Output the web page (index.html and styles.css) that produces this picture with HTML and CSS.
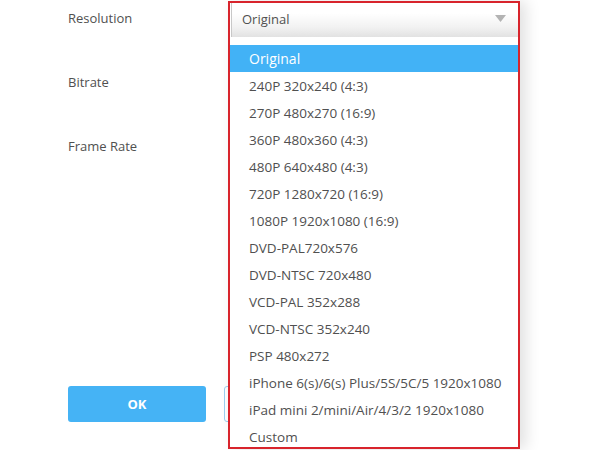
FILE: index.html
```html
<!DOCTYPE html>
<html>
<head>
<meta charset="utf-8">
<link rel="stylesheet" href="styles.css">
</head>
<body>
<div class="page">
  <div class="row">
    <div class="label">Resolution</div>
    <div class="field">
      <div class="combo">
        <div class="select">
          <span>Original</span>
          <svg class="arrow" width="11" height="7" viewBox="0 0 11 7"><path d="M0 0H11L5.5 7Z" fill="#b3b3b3"/></svg>
        </div>
        <ul class="list">
          <li class="active">Original</li>
          <li>240P 320x240 (4:3)</li>
          <li>270P 480x270 (16:9)</li>
          <li>360P 480x360 (4:3)</li>
          <li>480P 640x480 (4:3)</li>
          <li>720P 1280x720 (16:9)</li>
          <li>1080P 1920x1080 (16:9)</li>
          <li>DVD-PAL720x576</li>
          <li>DVD-NTSC 720x480</li>
          <li>VCD-PAL 352x288</li>
          <li>VCD-NTSC 352x240</li>
          <li>PSP 480x272</li>
          <li>iPhone 6(s)/6(s) Plus/5S/5C/5 1920x1080</li>
          <li>iPad mini 2/mini/Air/4/3/2 1920x1080</li>
          <li>Custom</li>
        </ul>
      </div>
    </div>
  </div>
  <div class="row">
    <div class="label">Bitrate</div>
    <div class="field"></div>
  </div>
  <div class="row">
    <div class="label">Frame Rate</div>
    <div class="field"></div>
  </div>
  <div class="buttons">
    <button class="btn ok">OK</button>
    <button class="btn cancel" aria-label="Cancel"></button>
  </div>
</div>
</body>
</html>
```

FILE: styles.css
```css
html, body {
  margin: 0;
  padding: 0;
  background: #fff;
}
body {
  font-family: "Open Sans", "Noto Sans", sans-serif;
  font-size: 13px;
  color: #505050;
}
.page {
  height: 450px;
  box-sizing: border-box;
  overflow: hidden;
  padding-left: 68px;
  display: flex;
  flex-direction: column;
  gap: 28px;
}
.row {
  display: flex;
  height: 36px;
  flex: none;
  align-items: center;
}
.label {
  width: 160px;
}
.field {
  position: relative;
  width: 292px;
  height: 36px;
}
.combo {
  position: absolute;
  left: 0;
  top: 1px;
  width: 292px;
  height: 448px;
  box-sizing: border-box;
  border: 2px solid #d8242c;
  background: #fff;
  overflow: hidden;
  z-index: 2;
  box-shadow: 6px 0 14px rgba(0, 0, 0, 0.12);
}
.select {
  margin-left: 1px;
  height: 34px;
  box-sizing: border-box;
  border-left: 1px solid #c8c8c8;
  background: linear-gradient(#ffffff 30%, #f2f2f2 70%, #e2e2e2);
  display: flex;
  align-items: center;
  justify-content: space-between;
  padding: 0 12px 3px 10px;
}
.arrow {
  display: block;
}
.list {
  list-style: none;
  margin: 8px 0 0 0;
  padding: 0;
  font-size: 13.5px;
}
.list li {
  height: 27px;
  line-height: 28px;
  padding-left: 19px;
  white-space: nowrap;
}
.list li.active {
  background: #42b2f6;
  color: #fff;
  font-size: 14px;
}
.buttons {
  margin-top: 194px;
  display: flex;
  flex: none;
  gap: 18px;
}
.btn {
  width: 138px;
  height: 36px;
  border-radius: 3px;
  font-family: "Open Sans", "Noto Sans", sans-serif;
  font-size: 13px;
  font-weight: bold;
}
.ok {
  background: #45b3f5;
  color: #fff;
  border: none;
}
.cancel {
  background: #fff;
  color: #45b3f5;
  border: 1px solid #9ccff0;
}
```
